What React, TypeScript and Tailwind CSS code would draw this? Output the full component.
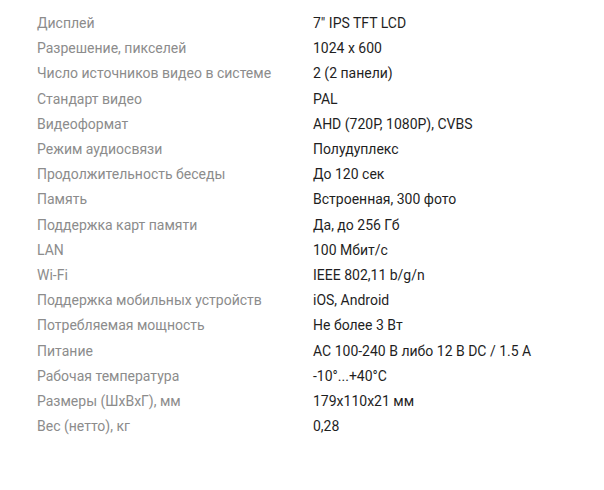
const specs: [string, string][] = [
  ['Дисплей', '7" IPS TFT LCD'],
  ['Разрешение, пикселей', '1024 x 600'],
  ['Число источников видео в системе', '2 (2 панели)'],
  ['Стандарт видео', 'PAL'],
  ['Видеоформат', 'AHD (720P, 1080P), CVBS'],
  ['Режим аудиосвязи', 'Полудуплекс'],
  ['Продолжительность беседы', 'До 120 сек'],
  ['Память', 'Встроенная, 300 фото'],
  ['Поддержка карт памяти', 'Да, до 256 Гб'],
  ['LAN', '100 Мбит/с'],
  ['Wi-Fi', 'IEEE 802,11 b/g/n'],
  ['Поддержка мобильных устройств', 'iOS, Android'],
  ['Потребляемая мощность', 'Не более 3 Вт'],
  ['Питание', 'AC 100-240 В либо 12 В DC / 1.5 А'],
  ['Рабочая температура', '-10°...+40°С'],
  ['Размеры (ШхВхГ), мм', '179x110x21 мм'],
  ['Вес (нетто), кг', '0,28'],
]

export default function App() {
  return (
    <div className="min-h-[490px] w-[604px] bg-white pl-[37px] pt-[11px] font-['Roboto',sans-serif] text-[14px] leading-[25.2px]">
      <dl className="grid grid-cols-[276px_1fr]">
        {specs.map(([label, value]) => (
          <div key={label} className="contents">
            <dt className="text-[#8c8c8c]">{label}</dt>
            <dd className="text-[#1f1f1f]">{value}</dd>
          </div>
        ))}
      </dl>
    </div>
  )
}
